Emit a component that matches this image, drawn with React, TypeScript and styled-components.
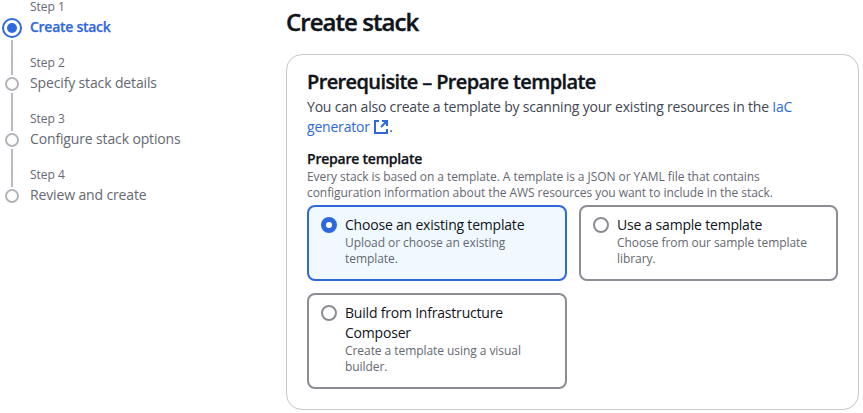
import React from "react";
import styled, { createGlobalStyle } from "styled-components";

const Global = createGlobalStyle`
  * { box-sizing: border-box; }
  body { margin: 0; background: #fff; overflow: hidden; font-family: "Open Sans", sans-serif; color: #0f141a; }
  #root { height: 413px; overflow: hidden; }
`;

const Page = styled.div`
  display: grid;
  grid-template-columns: 286px 573px;
  height: 413px;
`;
const Steps = styled.ol`
  list-style: none;
  margin: 0;
  padding: 0;
`;
const Step = styled.li`
  display: grid;
  grid-template-columns: 24px 1fr;
  column-gap: 6px;
  height: 56px;
`;
const Rail = styled.svg`
  display: block;
  overflow: visible;
`;
const StepNumber = styled.div`
  font-size: 12px;
  line-height: 14px;
  color: #656871;
`;
const StepName = styled.div<{ $active?: boolean }>`
  font-size: 14px;
  line-height: 20px;
  margin-top: 3px;
  font-weight: ${(p) => (p.$active ? 600 : 400)};
  letter-spacing: ${(p) => (p.$active ? "-0.28px" : "-0.14px")};
  -webkit-text-stroke: ${(p) => (p.$active ? "0.25px currentColor" : "0")};
  color: ${(p) => (p.$active ? "#2f68dc" : "#656871")};
`;
const Main = styled.main`
  min-width: 0;
`;
const PageTitle = styled.h1`
  margin: 7px 0 0;
  font-size: 24px;
  line-height: 30px;
  font-weight: 600;
  letter-spacing: -0.95px;
  -webkit-text-stroke: 0.4px currentColor;
`;
const Panel = styled.section`
  margin-top: 17px;
  height: 356px;
  border: 1px solid #c6c6cd;
  border-radius: 16px;
  padding: 15px 20px;
`;
const PanelTitle = styled.h2`
  margin: 0;
  font-size: 20px;
  line-height: 24px;
  font-weight: 600;
  letter-spacing: -0.62px;
  -webkit-text-stroke: 0.35px currentColor;
`;
const Intro = styled.p`
  margin: 3px 0 0;
  font-size: 14px;
  line-height: 20px;
  letter-spacing: -0.2px;
  color: #424650;
`;
const Link = styled.a`
  color: #2f68dc;
`;
const ExternalIcon = styled.svg`
  vertical-align: -3px;
`;
const FieldLabel = styled.div`
  margin-top: 12px;
  font-size: 14px;
  line-height: 20px;
  font-weight: 600;
  letter-spacing: -0.22px;
  -webkit-text-stroke: 0.25px currentColor;
`;
const Hint = styled.div`
  font-size: 12px;
  line-height: 16px;
  letter-spacing: -0.06px;
  color: #656871;
`;
const Tiles = styled.div`
  display: grid;
  grid-template-columns: 260px 259px;
  gap: 12px;
  margin-top: 4px;
`;
const Tile = styled.div<{ $selected?: boolean }>`
  display: flex;
  gap: 8px;
  padding: 8px 12px 12px;
  border: 2px solid ${(p) => (p.$selected ? "#2f68dc" : "#8c8c94")};
  border-radius: 8px;
  background: ${(p) => (p.$selected ? "#f0f9ff" : "#fff")};
`;
const Radio = styled.span<{ $selected?: boolean }>`
  flex: none;
  width: 16px;
  height: 16px;
  margin-top: 2px;
  border-radius: 50%;
  border: ${(p) => (p.$selected ? "5px solid #2f68dc" : "2px solid #8c8c94")};
  background: #fff;
`;
const TileTitle = styled.div`
  font-size: 14px;
  line-height: 20px;
  letter-spacing: -0.2px;
`;

const steps = ["Create stack", "Specify stack details", "Configure stack options", "Review and create"];
const tiles = [
  { title: ["Choose an existing template"], hint: ["Upload or choose an existing", "template."], selected: true },
  { title: ["Use a sample template"], hint: ["Choose from our sample template", "library."] },
  { title: ["Build from Infrastructure", "Composer"], hint: ["Create a template using a visual", "builder."] },
];
const lines = (items: string[]) => items.map((t) => <div key={t}>{t}</div>);

export default function App() {
  return (
    <>
      <Global />
      <Page>
        <Steps>
          {steps.map((name, i) => (
            <Step key={name}>
              <Rail width="24" height="56">
                {i < 3 && <path d={i ? "M12 37V75" : "M12 40V75"} stroke="#b9b9c0" strokeWidth="2" />}
                <circle cx="12" cy="28" r={i ? 6 : 9} fill="#fff" stroke={i ? "#b4b4bb" : "#2f68dc"} strokeWidth="2" />
                {i === 0 && <circle cx="12" cy="28" r="5" fill="#2f68dc" />}
              </Rail>
              <div>
                <StepNumber>Step {i + 1}</StepNumber>
                <StepName $active={i === 0}>{name}</StepName>
              </div>
            </Step>
          ))}
        </Steps>
        <Main>
          <PageTitle>Create stack</PageTitle>
          <Panel>
            <PanelTitle>Prerequisite – Prepare template</PanelTitle>
            <Intro>
              You can also create a template by scanning your existing resources in the <Link>IaC<br />generator{" "}
                <ExternalIcon width="16" height="16" viewBox="0 0 16 16" fill="none" stroke="currentColor" strokeWidth="2">
                  <path d="M9 2h5v5M8 8l6-6M6 2H2v12h12v-4" />
                </ExternalIcon></Link>.
            </Intro>
            <FieldLabel>Prepare template</FieldLabel>
            <Hint>
              {lines(["Every stack is based on a template. A template is a JSON or YAML file that contains", "configuration information about the AWS resources you want to include in the stack."])}
            </Hint>
            <Tiles>
              {tiles.map((t) => (
                <Tile key={t.title[0]} $selected={t.selected}>
                  <Radio $selected={t.selected} />
                  <div>
                    <TileTitle>{lines(t.title)}</TileTitle>
                    <Hint>{lines(t.hint)}</Hint>
                  </div>
                </Tile>
              ))}
            </Tiles>
          </Panel>
        </Main>
      </Page>
    </>
  );
}
